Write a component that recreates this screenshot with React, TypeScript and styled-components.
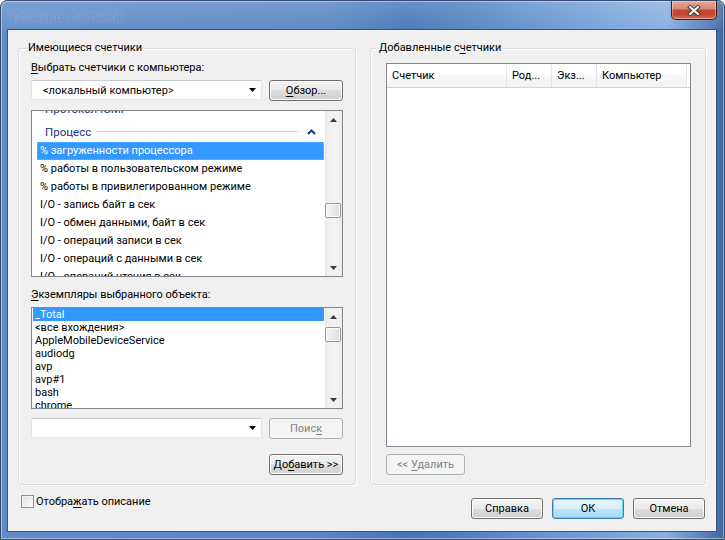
import React from 'react';
import styled, { createGlobalStyle } from 'styled-components';

const GlobalStyle = createGlobalStyle`
  html, body {
    margin: 0;
    padding: 0;
    width: 725px;
    height: 540px;
    overflow: hidden;
    background: #ffffff;
  }
  body {
    font-family: 'Segoe UI', Roboto, 'Noto Sans', sans-serif;
    font-size: 11px;
    color: #000;
  }
  * {
    box-sizing: border-box;
  }
  u {
    text-decoration-thickness: 1px;
    text-underline-offset: 2px;
  }
`;

const counters = [
	'% загруженности процессора',
	'% работы в пользовательском режиме',
	'% работы в привилегированном режиме',
	'I/O - запись байт в сек',
	'I/O - обмен данными, байт в сек',
	'I/O - операций записи в сек',
	'I/O - операций с данными в сек',
	'I/O - операций чтения в сек',
];

const instances = [
	'_Total',
	'<все вхождения>',
	'AppleMobileDeviceService',
	'audiodg',
	'avp',
	'avp#1',
	'bash',
	'chrome',
];

const columns = [
	{ title: 'Счетчик', width: 120 },
	{ title: 'Род...', width: 45 },
	{ title: 'Экз...', width: 45 },
	{ title: 'Компьютер', width: 90 },
];

const ArrowUp = () => (
	<svg width="7" height="4" viewBox="0 0 7 4">
		<path d="M0 4L3.5 0L7 4Z" fill="#3a3a3a" />
	</svg>
);

const ArrowDown = () => (
	<svg width="7" height="4" viewBox="0 0 7 4">
		<path d="M0 0L3.5 4L7 0Z" fill="#3a3a3a" />
	</svg>
);

const Scrollbar = ({ thumbTop }: { thumbTop: number }) => (
	<ScrollTrack>
		<ScrollArrow>
			<ArrowUp />
		</ScrollArrow>
		<ThumbLane>
			<Thumb $top={thumbTop} />
		</ThumbLane>
		<ScrollArrow>
			<ArrowDown />
		</ScrollArrow>
	</ScrollTrack>
);

const Combo = ({ width, text }: { width: number; text?: string }) => (
	<ComboBox $width={width}>
		<ComboText>{text}</ComboText>
		<svg width="7" height="4" viewBox="0 0 7 4">
			<path d="M0 0L3.5 4L7 0Z" fill="#000" />
		</svg>
	</ComboBox>
);

const App = () => {
	return (
		<>
			<GlobalStyle />
			<Window>
				<TitleBar>
					<TitleText>Добавить счетчики</TitleText>
					<CloseButton>
						<svg width="14" height="11" viewBox="0 0 14 11">
							<path d="M3 2L11 9M11 2L3 9" stroke="#3b3b3b" strokeWidth="4" strokeLinecap="square" />
							<path d="M3 2L11 9M11 2L3 9" stroke="#ffffff" strokeWidth="2" strokeLinecap="square" />
						</svg>
					</CloseButton>
				</TitleBar>
				<Client>
					<Groups>
						<GroupBox $padLeft={12} $padRight={12}>
							<Legend $shift={-5}>Имеющиеся счетчики</Legend>
							<FieldLabel $mt={4}>
								<u>В</u>ыбрать счетчики с компьютера:
							</FieldLabel>
							<ControlRow $mt={4}>
								<Combo width={231} text="<локальный компьютер>" />
								<PushButton $width={74}>
									<span>
										<u>О</u>бзор...
									</span>
								</PushButton>
							</ControlRow>
							<ListBox $mt={9} $height={167}>
								<Viewport>
									<CategoryRow $first>
										<span>Протокол ICMP</span>
										<CategoryLine />
									</CategoryRow>
									<CategoryRow>
										<span>Процесс</span>
										<CategoryLine />
										<svg width="9" height="6" viewBox="0 0 9 6">
											<path d="M1 5L4.5 1.5L8 5" stroke="#1b3a8e" strokeWidth="2" fill="none" />
										</svg>
									</CategoryRow>
									{counters.map((c, i) => (
										<CounterItem key={c} $selected={i === 0}>
											{c}
										</CounterItem>
									))}
								</Viewport>
								<Scrollbar thumbTop={75} />
							</ListBox>
							<FieldLabel $mt={10}>
								<u>Э</u>кземпляры выбранного объекта:
							</FieldLabel>
							<ListBox $mt={4} $height={102}>
								<Viewport>
									{instances.map((n, i) => (
										<InstanceItem key={n} $selected={i === 0}>
											{n}
										</InstanceItem>
									))}
								</Viewport>
								<Scrollbar thumbTop={2} />
							</ListBox>
							<ControlRow $mt={9}>
								<Combo width={231} />
								<PushButton $width={74} $variant="disabled">
									<span>
										Поис<u>к</u>
									</span>
								</PushButton>
							</ControlRow>
							<AddButtonSlot>
								<PushButton $width={74}>
									<span>
										До<u>б</u>авить &gt;&gt;
									</span>
								</PushButton>
							</AddButtonSlot>
						</GroupBox>
						<GroupBox $padLeft={15} $padRight={14}>
							<Legend $shift={-9}>
								Добавленные с<u>ч</u>етчики
							</Legend>
							<ListView>
								<HeaderRow>
									{columns.map((c) => (
										<HeaderCell key={c.title} $width={c.width}>
											{c.title}
										</HeaderCell>
									))}
									<HeaderFiller />
								</HeaderRow>
							</ListView>
							<RemoveSlot>
								<PushButton $width={79} $variant="disabled">
									<span>
										&lt;&lt; <u>У</u>далить
									</span>
								</PushButton>
							</RemoveSlot>
						</GroupBox>
					</Groups>
					<Footer>
						<CheckRow>
							<CheckBox />
							<span>
								Отобра<u>ж</u>ать описание
							</span>
						</CheckRow>
						<ButtonBar>
							<PushButton $width={72}>
								<span>Справка</span>
							</PushButton>
							<PushButton $width={72} $variant="default">
								<span>ОК</span>
							</PushButton>
							<PushButton $width={72}>
								<span>Отмена</span>
							</PushButton>
						</ButtonBar>
					</Footer>
				</Client>
			</Window>
		</>
	);
};

const Window = styled.div`
	width: 725px;
	height: 540px;
	display: flex;
	flex-direction: column;
	border: 1px solid #34496b;
	border-radius: 7px 7px 0 0;
	padding: 0 7px 7px 6px;
	background:
		linear-gradient(180deg, rgba(255, 255, 255, 0.18) 0px, rgba(255, 255, 255, 0.05) 28px, rgba(0, 0, 0, 0) 30px),
		linear-gradient(90deg, #5f8cc9 0%, #5885c5 45%, #4675b8 56%, #4f7ebf 63%, #6c99d4 78%, #88afe0 92%, #4d76b2 98.5%, #3e6399 100%);
	box-shadow: inset 0 0 0 1px rgba(255, 255, 255, 0.45);
`;

const TitleBar = styled.div`
	height: 28px;
	display: flex;
	justify-content: space-between;
	align-items: flex-start;
`;

const TitleText = styled.div`
	margin: 9px 0 0 4px;
	color: rgba(40, 70, 120, 0.14);
	text-shadow: 0 0 7px rgba(210, 228, 250, 0.55);
	font-size: 12px;
`;

const CloseButton = styled.div`
	width: 46px;
	height: 19px;
	display: flex;
	align-items: center;
	justify-content: center;
	border: 1px solid #4b1c12;
	border-top: none;
	border-radius: 0 0 5px 5px;
	background: linear-gradient(180deg, #e7a797 0%, #d88a78 42%, #c3452e 52%, #c24a30 78%, #d9765a 100%);
	box-shadow: inset 0 0 0 1px rgba(255, 255, 255, 0.35);
`;

const Client = styled.div`
	flex: 1;
	background: #f0f0f0;
	border: 1px solid #3f5375;
	padding: 10px 10px 0 10px;
	display: flex;
	flex-direction: column;
`;

const Groups = styled.div`
	display: grid;
	grid-template-columns: 338px 336px;
	column-gap: 14px;
`;

const GroupBox = styled.fieldset<{ $padLeft: number; $padRight: number }>`
	margin: 0;
	min-width: 0;
	height: 445px;
	border: 1px solid #d5dfe5;
	border-radius: 3px;
	padding: 0 ${(p) => p.$padRight}px 0 ${(p) => p.$padLeft}px;
	box-shadow: inset 1px 1px 0 #ffffff, 1px 1px 0 #ffffff;
	display: flex;
	flex-direction: column;
	align-items: flex-start;
`;

const Legend = styled.legend<{ $shift: number }>`
	margin-left: ${(p) => p.$shift}px;
	padding: 0 2px;
	line-height: 16px;
	height: 16px;
	color: #000;
`;

const FieldLabel = styled.div<{ $mt: number }>`
	margin-top: ${(p) => p.$mt}px;
	line-height: 16px;
	height: 16px;
`;

const ControlRow = styled.div<{ $mt: number }>`
	margin-top: ${(p) => p.$mt}px;
	display: flex;
	align-items: flex-start;
	gap: 7px;
`;

const ComboBox = styled.div<{ $width: number }>`
	width: ${(p) => p.$width}px;
	height: 20px;
	display: flex;
	align-items: center;
	padding: 0 5px 0 11px;
	background: #ffffff;
	border: 1px solid;
	border-color: #c9ccd2 #e2e3ea #e3e9ef #e2e3ea;
	border-radius: 2px;
`;

const ComboText = styled.span`
	flex: 1;
	white-space: nowrap;
`;

const PushButton = styled.div<{ $width: number; $variant?: 'normal' | 'default' | 'disabled' }>`
	width: ${(p) => p.$width}px;
	height: 21px;
	display: flex;
	align-items: center;
	justify-content: center;
	white-space: pre;
	border-radius: 3px;
	border: 1px solid
		${(p) => (p.$variant === 'default' ? '#3c7fb1' : p.$variant === 'disabled' ? '#adb2b5' : '#707070')};
	color: ${(p) => (p.$variant === 'disabled' ? '#838383' : '#000')};
	background: ${(p) =>
		p.$variant === 'default'
			? 'linear-gradient(180deg, #eaf6fd 0%, #d9f0fc 50%, #bee6fd 50%, #a7d9f5 100%)'
			: p.$variant === 'disabled'
			? '#f4f4f4'
			: 'linear-gradient(180deg, #f2f2f2 0%, #ebebeb 50%, #dddddd 50%, #cfcfcf 100%)'};
	box-shadow: ${(p) =>
		p.$variant === 'default'
			? 'inset 0 0 0 1px #5fd4f8'
			: p.$variant === 'disabled'
			? 'none'
			: 'inset 0 0 0 1px #fcfcfc'};
`;

const ListBox = styled.div<{ $mt: number; $height: number }>`
	margin-top: ${(p) => p.$mt}px;
	width: 312px;
	height: ${(p) => p.$height}px;
	display: flex;
	border: 1px solid #828790;
	background: #ffffff;
	overflow: hidden;
`;

const Viewport = styled.div`
	flex: 1;
	overflow: hidden;
	display: flex;
	flex-direction: column;
`;

const CategoryRow = styled.div<{ $first?: boolean }>`
	flex: none;
	height: ${(p) => (p.$first ? 24 : 21)}px;
	margin-top: ${(p) => (p.$first ? -14 : 0)}px;
	display: flex;
	align-items: center;
	padding: 0 9px 0 13px;
	color: #1e3287;
	font-size: 11.5px;
	white-space: nowrap;
`;

const CategoryLine = styled.div`
	flex: 1;
	height: 1px;
	margin: 0 9px 0 5px;
	background: #c7d1ea;
`;

const CounterItem = styled.div<{ $selected?: boolean }>`
	flex: none;
	height: 18px;
	line-height: 16px;
	margin: 0 1px 0 5px;
	padding-left: 2px;
	white-space: nowrap;
	color: ${(p) => (p.$selected ? '#ffffff' : '#000')};
	background: ${(p) => (p.$selected ? '#3399ff' : 'transparent')};
	border: 1px dotted ${(p) => (p.$selected ? '#e99b4d' : 'transparent')};
`;

const InstanceItem = styled.div<{ $selected?: boolean }>`
	flex: none;
	height: 13px;
	line-height: 13px;
	margin: 0 1px 0 1px;
	padding-left: 2px;
	white-space: nowrap;
	color: ${(p) => (p.$selected ? '#ffffff' : '#000')};
	background: ${(p) => (p.$selected ? '#3399ff' : 'transparent')};
`;

const ScrollTrack = styled.div`
	width: 17px;
	flex: none;
	display: flex;
	flex-direction: column;
	background: linear-gradient(90deg, #e3e3e3 0px, #eeeeee 2px, #f3f3f3 50%, #eeeeee 15px, #e7e7e7 17px);
`;

const ScrollArrow = styled.div`
	height: 17px;
	flex: none;
	display: flex;
	align-items: center;
	justify-content: center;
`;

const ThumbLane = styled.div`
	flex: 1;
`;

const Thumb = styled.div<{ $top: number }>`
	margin: ${(p) => p.$top}px 1px 0 0;
	height: 15px;
	border: 1px solid #979797;
	border-radius: 2px;
	background: linear-gradient(90deg, #f5f5f5 0%, #ececec 50%, #dcdcdc 100%);
	box-shadow: inset 0 0 0 1px #fbfbfb;
`;

const AddButtonSlot = styled.div`
	margin-top: 15px;
	align-self: flex-end;
`;

const ListView = styled.div`
	margin-top: 7px;
	width: 305px;
	height: 384px;
	border: 1px solid #828790;
	background: #ffffff;
`;

const HeaderRow = styled.div`
	height: 24px;
	display: flex;
	border-bottom: 1px solid #d5d5d5;
	background: linear-gradient(180deg, #ffffff 0%, #ffffff 45%, #f7f8fa 50%, #f1f2f4 100%);
`;

const HeaderCell = styled.div<{ $width: number }>`
	width: ${(p) => p.$width}px;
	flex: none;
	display: flex;
	align-items: center;
	padding-left: 5px;
	border-right: 1px solid #e3e6ea;
	white-space: nowrap;
	overflow: hidden;
`;

const HeaderFiller = styled.div`
	flex: 1;
	background: #ffffff;
`;

const RemoveSlot = styled.div`
	margin-top: 7px;
`;

const Footer = styled.div`
	display: flex;
	justify-content: space-between;
	align-items: flex-start;
	padding: 13px 1px 0 3px;
`;

const CheckRow = styled.div`
	margin-top: -3px;
	display: flex;
	align-items: center;
	gap: 2px;
	height: 13px;
	line-height: 16px;
`;

const CheckBox = styled.div`
	width: 13px;
	height: 13px;
	border: 1px solid #8e8f8f;
	background: linear-gradient(135deg, #dcdcdc 0%, #f4f4f4 70%, #fbfbfb 100%);
	box-shadow: inset 0 0 0 1px #f4f4f4;
`;

const ButtonBar = styled.div`
	display: flex;
	gap: 9px;
`;

export default App;
